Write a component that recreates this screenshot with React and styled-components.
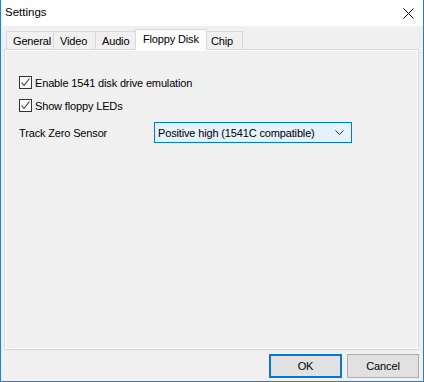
import styled, { createGlobalStyle } from "styled-components";

const Global = createGlobalStyle`
  html, body {
    margin: 0;
    padding: 0;
    background: #ffffff;
  }
  body {
    font-family: "Liberation Sans", Arial, sans-serif;
    font-size: 11px;
    letter-spacing: -0.15px;
    color: #000;
  }
`;

const Window = styled.div`
  width: 424px;
  height: 382px;
  box-sizing: border-box;
  border: 1px solid #1883d7;
  border-top: none;
  background: #f0f0f0;
  display: flex;
  flex-direction: column;
`;

const TitleBar = styled.div`
  height: 26px;
  background: #ffffff;
  display: flex;
  align-items: center;
  justify-content: space-between;
  padding: 0 9px 0 4px;
`;

const Title = styled.span`
  font-size: 11.5px;
  letter-spacing: 0;
  line-height: 1;
  padding-bottom: 1px;
`;

const Body = styled.div`
  flex: 1;
  display: flex;
  flex-direction: column;
  padding: 3px 4px 0 3px;
`;

const TabStrip = styled.div`
  display: flex;
  align-items: flex-end;
  height: 20px;
  padding-left: 2px;
  position: relative;
  z-index: 1;
`;

const Tab = styled.div`
  box-sizing: border-box;
  width: ${(p) => p.$w}px;
  height: ${(p) => (p.$active ? 21 : 18)}px;
  margin: 0 ${(p) => (p.$active ? -2 : 0)}px ${(p) => (p.$active ? -1 : 0)}px;
  padding-left: ${(p) => (p.$active ? 7 : 6)}px;
  border: 1px solid #d9d9d9;
  border-left: ${(p) => (p.$first || p.$active ? "1px solid #d9d9d9" : "none")};
  border-bottom: none;
  background: ${(p) => (p.$active ? "#ffffff" : "#f0f0f0")};
  display: flex;
  align-items: center;
  padding-bottom: ${(p) => (p.$active ? 3 : 0)}px;
  white-space: nowrap;
  position: relative;
  z-index: ${(p) => (p.$active ? 2 : 1)};
`;

const Panel = styled.div`
  height: 301px;
  box-sizing: border-box;
  border: 1px solid #d9d9d9;
  box-shadow: inset 1px 1px 0 #ffffff, inset -1px -1px 0 #ffffff;
  background: #f0f0f0;
  display: flex;
  flex-direction: column;
  padding: 26px 14px 0 14px;
`;

const CheckRow = styled.label`
  display: flex;
  align-items: center;
  height: 13px;
  margin-bottom: ${(p) => p.$gap}px;
  white-space: nowrap;
`;

const Box = styled.span`
  box-sizing: border-box;
  width: 13px;
  height: 13px;
  border: 1px solid #333333;
  background: #ffffff;
  display: flex;
  align-items: center;
  justify-content: center;
  margin-right: 3px;
`;

const FieldRow = styled.div`
  display: flex;
  align-items: center;
  height: 21px;
`;

const FieldLabel = styled.span`
  width: 135px;
  white-space: nowrap;
`;

const Select = styled.div`
  box-sizing: border-box;
  width: 198px;
  height: 21px;
  border: 1px solid #0078d7;
  background: #e5f1fb;
  display: flex;
  align-items: center;
  justify-content: space-between;
  padding: 0 7px 0 3px;
  white-space: nowrap;
`;

const ButtonRow = styled.div`
  display: flex;
  justify-content: flex-end;
  gap: 5px;
  padding: 4px 0 0 0;
`;

const Button = styled.button`
  box-sizing: border-box;
  width: ${(p) => (p.$primary ? 73 : 72)}px;
  height: 24px;
  font: inherit;
  letter-spacing: inherit;
  color: #000;
  background: #e1e1e1;
  border: ${(p) => (p.$primary ? "2px solid #0078d7" : "1px solid #adadad")};
  padding: 0;
  margin: 0;
`;

function Check() {
  return (
    <svg width="11" height="11" viewBox="0 0 11 11">
      <path d="M1.5 5.5 L4 8.5 L9.5 1.5" fill="none" stroke="#333" strokeWidth="1.1" />
    </svg>
  );
}

const tabs = [
  { label: "General", w: 48 },
  { label: "Video", w: 42 },
  { label: "Audio", w: 41 },
  { label: "Floppy Disk", w: 72, active: true },
  { label: "Chip", w: 38 },
];

export default function App() {
  return (
    <>
      <Global />
      <Window>
        <TitleBar>
          <Title>Settings</Title>
          <svg width="11" height="11" viewBox="0 0 11 11">
            <path d="M0.5 0.5 L10.5 10.5 M10.5 0.5 L0.5 10.5" stroke="#000" strokeWidth="1" />
          </svg>
        </TitleBar>
        <Body>
          <TabStrip>
            {tabs.map((t, i) => (
              <Tab key={t.label} $w={t.w} $active={t.active} $first={i === 0}>
                {t.label}
              </Tab>
            ))}
          </TabStrip>
          <Panel>
            <CheckRow $gap={10}>
              <Box>
                <Check />
              </Box>
              Enable 1541 disk drive emulation
            </CheckRow>
            <CheckRow $gap={10}>
              <Box>
                <Check />
              </Box>
              Show floppy LEDs
            </CheckRow>
            <FieldRow>
              <FieldLabel>Track Zero Sensor</FieldLabel>
              <Select>
                Positive high (1541C compatible)
                <svg width="9" height="5" viewBox="0 0 9 5">
                  <path d="M0.5 0.5 L4.5 4.5 L8.5 0.5" fill="none" stroke="#333" strokeWidth="1" />
                </svg>
              </Select>
            </FieldRow>
          </Panel>
          <ButtonRow>
            <Button $primary>OK</Button>
            <Button>Cancel</Button>
          </ButtonRow>
        </Body>
      </Window>
    </>
  );
}
